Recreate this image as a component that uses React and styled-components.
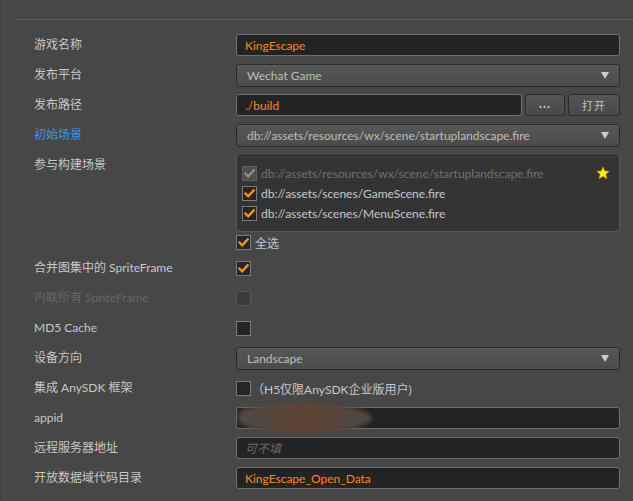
import React from 'react';
import styled, { createGlobalStyle } from 'styled-components';

const GlobalStyle = createGlobalStyle`
  html, body {
    margin: 0;
    padding: 0;
    background: #474747;
  }
  body {
    font-family: Lato, "Noto Sans CJK SC", sans-serif;
    font-size: 12px;
    color: #c6c6c6;
    overflow: hidden;
  }
`;

const Panel = styled.div`
  width: 633px;
  min-height: 501px;
  box-sizing: border-box;
  border-left: 1px solid #404040;
  padding-top: 19px;
`;

const Divider = styled.div`
  height: 1px;
  margin: 0 0 10px 16px;
  background: #616161;
`;

const Form = styled.div`
  padding: 0 13px 0 33px;
`;

const Row = styled.div`
  display: grid;
  grid-template-columns: 202px 384px;
  align-items: ${props => (props.$top ? 'start' : 'center')};
  min-height: 30px;
`;

const labelColors = {
  normal: '#c8c8c8',
  blue: '#2e9cf0',
  muted: '#666666',
};

const Label = styled.div`
  min-height: 16px;
  line-height: 16px;
  white-space: nowrap;
  color: ${props => labelColors[props.$tone || 'normal']};
  padding-top: ${props => (props.$top ? '7px' : '0')};
`;

const TextInput = styled.input`
  box-sizing: border-box;
  width: 100%;
  height: 22px;
  padding: 0 8px;
  background: #232323;
  border: 1px solid #707070;
  border-radius: 3px;
  color: #f58a25;
  font: inherit;
  outline: none;
  &::placeholder {
    color: #686868;
    font-style: italic;
  }
`;

const Select = styled.div`
  box-sizing: border-box;
  height: 23px;
  display: flex;
  align-items: center;
  justify-content: space-between;
  padding: 0 10px;
  border: 1px solid #2a2a2a;
  border-radius: 3px;
  background: linear-gradient(#575757, #4b4b4b);
  box-shadow: inset 0 1px 0 rgba(255, 255, 255, 0.05);
  color: #bdbdbd;
  white-space: nowrap;
`;

const Arrow = styled.span`
  width: 0;
  height: 0;
  border-left: 4px solid transparent;
  border-right: 4px solid transparent;
  border-top: 7px solid #cccccc;
`;

const PathField = styled.div`
  display: flex;
  gap: 3px;
`;

const Button = styled.button`
  box-sizing: border-box;
  flex: 0 0 ${props => props.$w}px;
  height: 22px;
  padding: 0;
  border: 1px solid #2a2a2a;
  border-radius: 3px;
  background: linear-gradient(#555555, #494949);
  color: #c0c0c0;
  font: inherit;
  font-size: 11px;
  font-weight: ${props => (props.$bold ? 700 : 400)};
  letter-spacing: 1px;
`;

const SceneField = styled.div`
  padding: 3px 0 2px;
`;

const SceneBox = styled.div`
  box-sizing: border-box;
  height: 79px;
  padding: 9px 5px 0;
  border: 1px solid #585858;
  border-radius: 4px;
  background: #343434;
`;

const SceneItem = styled.div`
  display: flex;
  align-items: center;
  gap: 4px;
  height: 20px;
  color: ${props => (props.$disabled ? '#737373' : '#c8c8c8')};
`;

const Star = styled.svg`
  margin-left: auto;
  margin-right: 4px;
`;

const CheckLine = styled.div`
  display: flex;
  align-items: center;
  gap: ${props => props.$gap || 4}px;
  margin-top: ${props => props.$mt || 0}px;
  color: #c8c8c8;
  white-space: nowrap;
`;

const boxStyles = {
  normal: { border: '#7a7a7a', bg: '#262626', mark: '#f7921e' },
  disabled: { border: '#555555', bg: '#3c3c3c', mark: '#888888' },
  locked: { border: '#606060', bg: '#4f4f4f', mark: '#8c8c8c' },
};

const Box = styled.span`
  box-sizing: border-box;
  display: inline-flex;
  align-items: center;
  justify-content: center;
  flex: 0 0 15px;
  width: 15px;
  height: 15px;
  border: 1px solid ${props => boxStyles[props.$kind].border};
  background: ${props => boxStyles[props.$kind].bg};
`;

const Masked = styled.div`
  position: relative;
`;

const Smudge = styled.div`
  position: absolute;
  left: 2px;
  top: -4px;
  width: 134px;
  height: 30px;
  border-radius: 40% 50% 50% 45%;
  background: linear-gradient(90deg, #4d4a49 0%, #5b4538 35%, #5f4433 55%, #54463f 80%, #4a4846 100%);
  filter: blur(2px);
  pointer-events: none;
`;

function Checkbox({ checked, kind = 'normal' }) {
  return (
    <Box $kind={kind}>
      {checked ? (
        <svg width="11" height="11" viewBox="0 0 11 11">
          <path
            d="M1.5 5.6 L4.2 8.3 L9.6 2.4"
            fill="none"
            stroke={boxStyles[kind].mark}
            strokeWidth="2.4"
            strokeLinecap="square"
          />
        </svg>
      ) : null}
    </Box>
  );
}

function Dropdown({ value }) {
  return (
    <Select>
      <span>{value}</span>
      <Arrow />
    </Select>
  );
}

const scenes = [
  { path: 'db://assets/resources/wx/scene/startuplandscape.fire', start: true },
  { path: 'db://assets/scenes/GameScene.fire' },
  { path: 'db://assets/scenes/MenuScene.fire' },
];

export default function App() {
  return (
    <Panel>
      <GlobalStyle />
      <Divider />
      <Form>
        <Row>
          <Label>游戏名称</Label>
          <TextInput readOnly defaultValue="KingEscape" />
        </Row>
        <Row>
          <Label>发布平台</Label>
          <Dropdown value="Wechat Game" />
        </Row>
        <Row>
          <Label>发布路径</Label>
          <PathField>
            <TextInput readOnly defaultValue="./build" />
            <Button $w={40} $bold>···</Button>
            <Button $w={52}>打开</Button>
          </PathField>
        </Row>
        <Row>
          <Label $tone="blue">初始场景</Label>
          <Dropdown value="db://assets/resources/wx/scene/startuplandscape.fire" />
        </Row>
        <Row $top>
          <Label $top>参与构建场景</Label>
          <SceneField>
            <SceneBox>
              {scenes.map(scene => (
                <SceneItem key={scene.path} $disabled={scene.start}>
                  <Checkbox checked kind={scene.start ? 'locked' : 'normal'} />
                  <span>{scene.path}</span>
                  {scene.start ? (
                    <Star width="14" height="14" viewBox="0 0 24 24">
                      <path
                        d="M12 1.5 L15 8.6 L22.6 9.2 L16.8 14.2 L18.6 21.7 L12 17.7 L5.4 21.7 L7.2 14.2 L1.4 9.2 L9 8.6 Z"
                        fill="#f6ec12"
                        stroke="#c9a000"
                        strokeWidth="1"
                      />
                    </Star>
                  ) : null}
                </SceneItem>
              ))}
            </SceneBox>
            <CheckLine $mt={2}>
              <Checkbox checked />
              <span>全选</span>
            </CheckLine>
          </SceneField>
        </Row>
        <Row>
          <Label>合并图集中的 SpriteFrame</Label>
          <CheckLine>
            <Checkbox checked />
          </CheckLine>
        </Row>
        <Row>
          <Label $tone="muted">内联所有 SpriteFrame</Label>
          <CheckLine>
            <Checkbox kind="disabled" />
          </CheckLine>
        </Row>
        <Row>
          <Label>MD5 Cache</Label>
          <CheckLine>
            <Checkbox />
          </CheckLine>
        </Row>
        <Row>
          <Label>设备方向</Label>
          <Dropdown value="Landscape" />
        </Row>
        <Row>
          <Label>集成 AnySDK 框架</Label>
          <CheckLine $gap={1}>
            <Checkbox />
            <span>（H5仅限AnySDK企业版用户)</span>
          </CheckLine>
        </Row>
        <Row>
          <Label>appid</Label>
          <Masked>
            <TextInput readOnly defaultValue="" />
            <Smudge />
          </Masked>
        </Row>
        <Row>
          <Label>远程服务器地址</Label>
          <TextInput readOnly placeholder="可不填" />
        </Row>
        <Row>
          <Label>开放数据域代码目录</Label>
          <TextInput readOnly defaultValue="KingEscape_Open_Data" />
        </Row>
        <Row>
          <Label />
          <CheckLine>
            <Checkbox />
          </CheckLine>
        </Row>
      </Form>
    </Panel>
  );
}
